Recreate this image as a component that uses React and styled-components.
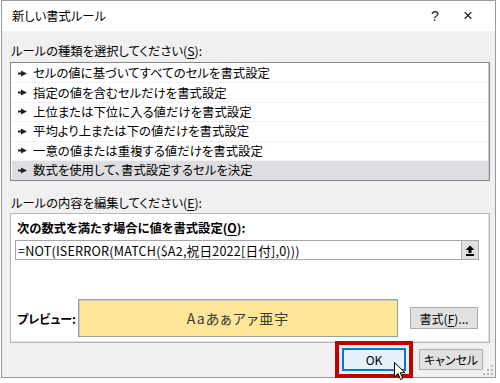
import styled, { createGlobalStyle } from "styled-components";

const Global = createGlobalStyle`
  html, body { margin: 0; padding: 0; background: #fff; }
  body {
    width: 500px;
    height: 383px;
    overflow: hidden;
    font-family: "Noto Sans CJK JP", "Noto Sans", sans-serif;
    font-feature-settings: "palt";
    color: #000;
  }
`;

const Dialog = styled.div`
  position: relative;
  box-sizing: border-box;
  margin-left: 1px;
  width: 495px;
  height: 378px;
  border: 1px solid #9b9b9b;
  background: #f0f0f0;
  display: flex;
  flex-direction: column;
`;

const TitleBar = styled.div`
  height: 30px;
  flex: none;
  background: #fff;
  display: flex;
  align-items: center;
  padding-left: 10px;
  font-size: 12.3px;
`;

const Title = styled.div`
  flex: 1;
`;

const TitleBtn = styled.div`
  width: ${(p) => p.$w}px;
  text-align: center;
  font-family: "Liberation Sans", sans-serif;
  font-size: ${(p) => p.$size}px;
  color: #222;
`;

const Body = styled.div`
  flex: 1;
  display: flex;
  flex-direction: column;
  padding: 12px 5px 0 8px;
`;

const SectionLabel = styled.div`
  font-size: 12.3px;
  line-height: 16px;
  height: 16px;
  margin: ${(p) => p.$margin};
  padding-left: 1px;
`;

const Key = styled.span`
  text-decoration: underline;
  text-underline-offset: 2px;
`;

const RuleList = styled.div`
  box-sizing: border-box;
  height: 119px;
  background: #fff;
  border: 1px solid #828790;
  box-shadow: inset -1px -1px 0 #c8c8c8;
  padding: 1px 1px 0 1px;
`;

const RuleRow = styled.div`
  box-sizing: border-box;
  height: 19.4px;
  display: flex;
  align-items: center;
  padding-left: 6px;
  gap: 6px;
  font-size: 12.4px;
  border-bottom: 1px solid ${(p) => (p.$selected ? "#dedde2" : "#f2f2f2")};
  background: ${(p) => (p.$selected ? "#dedde2" : "#fff")};
`;

const EditPanel = styled.div`
  box-sizing: border-box;
  height: 130px;
  background: #fff;
  border: 1px solid #b8b8b8;
  box-shadow: inset -1px -1px 0 #e0e0e0;
  padding: 6px 10px 0 4px;
  display: flex;
  flex-direction: column;
`;

const BoldLabel = styled.div`
  font-size: 12.3px;
  font-weight: 700;
  line-height: 16px;
  padding-left: ${(p) => p.$pad || 0}px;
`;

const FormulaBox = styled.div`
  margin-top: 4px;
  height: 20px;
  box-sizing: border-box;
  border: 1px solid #a6a6a6;
  display: flex;
  align-items: center;
`;

const FormulaText = styled.div`
  flex: 1;
  padding-left: 2px;
  font-size: 12.6px;
  letter-spacing: 0.2px;
  white-space: nowrap;
`;

const RefButton = styled.div`
  width: 17px;
  height: 18px;
  box-sizing: border-box;
  border-left: 1px solid #adadad;
  background: #e1e1e1;
  display: flex;
  align-items: center;
  justify-content: center;
`;

const PreviewRow = styled.div`
  margin-top: 39px;
  display: flex;
  align-items: center;
  padding-left: 2px;
`;

const PreviewLabel = styled.div`
  width: 61px;
  font-size: 12px;
  font-weight: 700;
`;

const PreviewBox = styled.div`
  width: 320px;
  height: 38px;
  box-sizing: border-box;
  border: 1px solid #9f9f9f;
  box-shadow: inset 1px 1px 0 #c8c8c8;
  background: #ffe699;
  display: flex;
  align-items: center;
  justify-content: center;
  font-size: 14px;
  letter-spacing: 1px;
  color: #3a3a3a;
`;

const Button = styled.button`
  box-sizing: border-box;
  width: ${(p) => p.$w}px;
  height: ${(p) => p.$h}px;
  margin: 0;
  padding: 0;
  font-family: "Noto Sans CJK JP", sans-serif;
  font-feature-settings: "palt";
  font-size: 12px;
  color: #000;
  background: ${(p) => (p.$primary ? "#e5f1fb" : "#e1e1e1")};
  border: ${(p) => (p.$primary ? "2px solid #0078d7" : "1px solid #adadad")};
  position: relative;
`;

const FormatButton = styled(Button)`
  margin-left: 12px;
`;

const Footer = styled.div`
  display: flex;
  justify-content: flex-end;
  align-items: center;
  gap: 13px;
  margin-top: 5px;
  padding-right: 7px;
`;

const OkWrap = styled.div`
  outline: 4px solid #c00000;
  outline-offset: 3px;
  display: flex;
`;

const Cursor = styled.svg`
  position: absolute;
  left: 50px;
  top: 12px;
`;

const Grip = styled.svg`
  position: absolute;
  right: 2px;
  bottom: 2px;
`;

const rules = [
  "セルの値に基づいてすべてのセルを書式設定",
  "指定の値を含むセルだけを書式設定",
  "上位または下位に入る値だけを書式設定",
  "平均より上または下の値だけを書式設定",
  "一意の値または重複する値だけを書式設定",
  "数式を使用して、書式設定するセルを決定",
];

function Bullet() {
  return (
    <svg width="9" height="7" viewBox="0 0 9 7">
      <path d="M0 2.6 H3 V0.5 L9 3.5 L3 6.5 V4.4 H0 Z" fill="#222" />
    </svg>
  );
}

export default function App() {
  return (
    <>
      <Global />
      <Dialog>
        <TitleBar>
          <Title>新しい書式ルール</Title>
          <TitleBtn $w={20} $size={14}>?</TitleBtn>
          <TitleBtn $w={46} $size={17} style={{ marginRight: 4 }}>
            ×
          </TitleBtn>
        </TitleBar>
        <Body>
          <SectionLabel $margin="0 0 3px 0">
            ルールの種類を選択してください(<Key>S</Key>):
          </SectionLabel>
          <RuleList>
            {rules.map((r, i) => (
              <RuleRow key={r} $selected={i === rules.length - 1}>
                <Bullet />
                <span>{r}</span>
              </RuleRow>
            ))}
          </RuleList>
          <SectionLabel $margin="14px 0 2px 0">
            ルールの内容を編集してください(<Key>E</Key>):
          </SectionLabel>
          <EditPanel>
            <BoldLabel $pad={2}>
              次の数式を満たす場合に値を書式設定(<Key>O</Key>):
            </BoldLabel>
            <FormulaBox>
              <FormulaText>=NOT(ISERROR(MATCH($A2,祝日2022[日付],0)))</FormulaText>
              <RefButton>
                <svg width="10" height="11" viewBox="0 0 10 11">
                  <path d="M5 0.5 L9.5 5 H6.5 V8 H3.5 V5 H0.5 Z" fill="#000" />
                  <rect x="1" y="9" width="8" height="2" fill="#000" />
                </svg>
              </RefButton>
            </FormulaBox>
            <PreviewRow>
              <PreviewLabel>プレビュー:</PreviewLabel>
              <PreviewBox>Aaあぁアァ亜宇</PreviewBox>
              <FormatButton $w={68} $h={22}>
                書式(<Key>F</Key>)...
              </FormatButton>
            </PreviewRow>
          </EditPanel>
          <Footer>
            <OkWrap>
              <Button $primary $w={64} $h={23}>
                OK
                <Cursor width="12" height="19" viewBox="0 0 12 19">
                  <path
                    d="M0.5 0.5 V15 L4 11.5 L6.5 17.5 L8.8 16.5 L6.3 10.7 H11 Z"
                    fill="#fff"
                    stroke="#000"
                    strokeWidth="1"
                    strokeLinejoin="miter"
                  />
                </Cursor>
              </Button>
            </OkWrap>
            <Button $w={64} $h={21}>
              キャンセル
            </Button>
          </Footer>
        </Body>
        <Grip width="10" height="10" viewBox="0 0 10 10">
          {[
            [8, 0],
            [8, 4],
            [4, 4],
            [8, 8],
            [4, 8],
            [0, 8],
          ].map(([x, y]) => (
            <rect key={`${x}-${y}`} x={x} y={y} width="2" height="2" fill="#b5b5b5" />
          ))}
        </Grip>
      </Dialog>
    </>
  );
}
